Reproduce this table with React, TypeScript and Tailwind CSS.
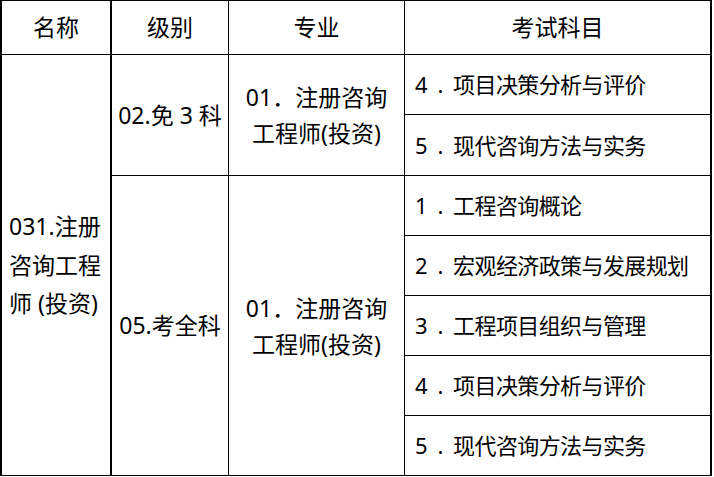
const font = {
  fontFamily: '"Noto Sans", "Noto Sans CJK SC", sans-serif',
};

const groups = [
  {
    level: '02.免 3 科',
    subjects: ['4\u2002.\u2002项目决策分析与评价', '5\u2002.\u2002现代咨询方法与实务'],
  },
  {
    level: '05.考全科',
    subjects: [
      '1\u2002.\u2002工程咨询概论',
      '2\u2002.\u2002宏观经济政策与发展规划',
      '3\u2002.\u2002工程项目组织与管理',
      '4\u2002.\u2002项目决策分析与评价',
      '5\u2002.\u2002现代咨询方法与实务',
    ],
  },
];

export default function App() {
  return (
    <div className="w-[714px] h-[477px] bg-white text-black" style={font}>
      <div className="w-[712px] border-l-2 border-r-2 border-t border-b border-black">
        {/* header */}
        <div className="flex h-[54px] border-b border-black text-[23px]">
          <div className="w-[110px] border-r-2 border-black flex items-center justify-center">名称</div>
          <div className="w-[117px] border-r border-black flex items-center justify-center">级别</div>
          <div className="w-[176px] border-r border-black flex items-center justify-center">专业</div>
          <div className="flex-1 flex items-center justify-center">考试科目</div>
        </div>

        {/* body */}
        <div className="flex">
          <div className="w-[110px] border-r-2 border-black flex items-center pl-[7px] text-[23px] leading-[38.5px] whitespace-nowrap">
            <div>
              031.注册
              <br />
              咨询工程
              <br />
              师 (投资)
            </div>
          </div>
          <div className="flex-1 flex flex-col">
            {groups.map((g, gi) => (
              <div
                key={gi}
                className={`flex ${gi === 0 ? 'border-b border-black' : ''}`}
              >
                <div className="w-[117px] border-r border-black flex items-center justify-center text-[23px]">
                  {g.level}
                </div>
                <div className="w-[176px] border-r border-black flex items-center justify-center text-center text-[23px] leading-[36px]">
                  <div>
                    01．注册咨询
                    <br />
                    工程师(投资)
                  </div>
                </div>
                <div className="flex-1 flex flex-col">
                  {g.subjects.map((s, si) => (
                    <div
                      key={si}
                      className={`flex items-center pl-[10px] text-[22px] tracking-[-0.6px] whitespace-pre ${
                        si < g.subjects.length - 1 ? 'border-b border-black' : ''
                      } ${gi === 1 && si === g.subjects.length - 1 ? 'h-[59px]' : 'h-[60px]'}`}
                    >
                      {s}
                    </div>
                  ))}
                </div>
              </div>
            ))}
          </div>
        </div>
      </div>
    </div>
  );
}
